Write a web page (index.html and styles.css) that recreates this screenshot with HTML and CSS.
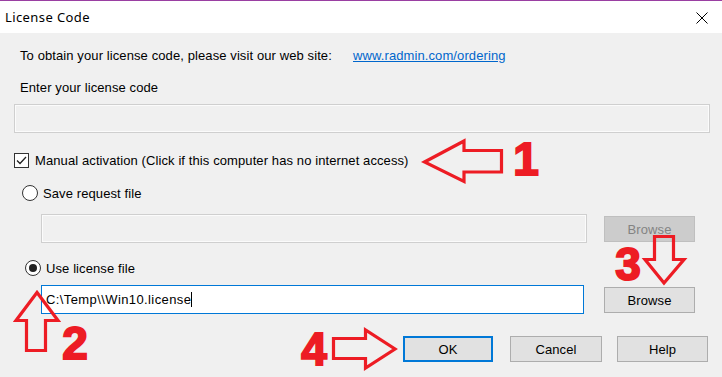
FILE: index.html
```html
<!DOCTYPE html>
<html>
<head>
<meta charset="utf-8">
<link rel="stylesheet" href="styles.css">
</head>
<body>
<div class="window">
  <div class="titlebar">
    <span class="title">License Code</span>
    <svg class="close" width="12" height="12" viewBox="0 0 12 12"><path d="M0.5 0.5 L11.5 11.5 M11.5 0.5 L0.5 11.5" stroke="#000" stroke-width="1" fill="none"/></svg>
  </div>
  <div class="content">
    <div class="row info">
      <span class="info-text">To obtain your license code, please visit our web site:</span>
      <a class="link">www.radmin.com/ordering</a>
    </div>
    <div class="row label">Enter your license code</div>
    <div class="field field-disabled wide"></div>
    <div class="row check-row">
      <span class="checkbox">
        <svg width="15" height="15" viewBox="0 0 15 15"><path d="M3 7.5 L6 10.5 L12 4" stroke="#222" stroke-width="1.3" fill="none"/></svg>
      </span>
      <span>Manual activation (Click if this computer has no internet access)</span>
    </div>
    <div class="row radio-row r1">
      <span class="radio"></span>
      <span>Save request file</span>
    </div>
    <div class="file-row fr1">
      <div class="field field-disabled f2"></div>
      <div class="btn btn-disabled">Browse</div>
    </div>
    <div class="row radio-row r2">
      <span class="radio checked"></span>
      <span>Use license file</span>
    </div>
    <div class="file-row fr2">
      <div class="field field-active f3"><span class="path">C:\Temp\\Win10.license</span><span class="caret"></span></div>
      <div class="btn">Browse</div>
    </div>
    <div class="buttons">
      <div class="btn btn-default">OK</div>
      <div class="btn btn-cancel">Cancel</div>
      <div class="btn btn-help">Help</div>
    </div>
  </div>
  <svg class="annot" width="722" height="377" viewBox="0 0 722 377">
    <g fill="none" stroke="#ed1c24" stroke-width="3.2" stroke-linejoin="miter">
      <polygon points="424.5,162 464,141 464,150.5 501.5,150.5 501.5,172 464,172 464,181.5"/>
      <polygon points="37,292.5 16,320.5 26.5,320.5 26.5,350.5 45.5,350.5 45.5,320.5 58,320.5"/>
      <polygon points="654.5,236.5 673.5,236.5 673.5,259.5 684,259.5 664,283 645,259.5 654.5,259.5"/>
      <polygon points="333.5,338.5 365.5,338.5 365.5,330 395,349 365.5,368 365.5,358.5 333.5,358.5"/>
    </g>
    <g class="num" fill="#ed1c24" stroke="#ed1c24" stroke-width="2" text-anchor="middle">
      <text x="526" y="175">1</text>
      <text x="75" y="359">2</text>
      <text x="628" y="280">3</text>
      <text x="314" y="365">4</text>
    </g>
  </svg>
</div>
</body>
</html>
```
FILE: styles.css
```css
* { box-sizing: border-box; }
html, body { margin: 0; padding: 0; }
body {
  background: #f0f0f0;
  font-family: "Liberation Sans", Arial, sans-serif;
  font-size: 13px;
  letter-spacing: 0.1px;
  color: #000;
}
.window {
  position: relative;
  width: 722px;
  height: 377px;
  background: #f0f0f0;
  overflow: hidden;
}
.titlebar {
  height: 33px;
  background: #fff;
  border-top: 1px solid #9a3fa2;
  display: flex;
  align-items: center;
  justify-content: space-between;
  padding: 0 14px 0 5px;
}
.title {
  font-family: "Noto Sans", "Open Sans", sans-serif;
  font-size: 13px;
  letter-spacing: 0.4px;
  color: #000;
  padding-bottom: 1px;
}
.close { display: block; margin-top: 1px; }
.content {
  display: flex;
  flex-direction: column;
  padding-left: 14px;
}
.row {
  height: 16px;
  display: flex;
  align-items: center;
  white-space: nowrap;
}
.info { margin-top: 14px; padding-left: 6px; }
.info-text { width: 333px; flex: none; }
.link { color: #0066cc; text-decoration: underline; }
.label { margin-top: 16px; padding-left: 6px; }
.field {
  height: 29px;
  border: 1px solid #cfcfcf;
}
.field-disabled { background: #f0f0f0; outline: 1px solid #fbfbfb; outline-offset: -2px; }
.wide { margin-top: 9px; width: 696px; }
.check-row { margin-top: 19px; gap: 6px; }
.checkbox {
  width: 15px;
  height: 15px;
  border: 1px solid #333;
  background: #fff;
  display: block;
  flex: none;
}
.checkbox svg { display: block; margin: -1px; }
.radio-row { gap: 5px; }
.r1 { margin-top: 17px; padding-left: 8px; }
.r2 { margin-top: 17px; padding-left: 11px; }
.radio {
  width: 16px;
  height: 16px;
  border: 1px solid #333;
  border-radius: 50%;
  background: #fff;
  flex: none;
  display: flex;
  align-items: center;
  justify-content: center;
}
.radio.checked::after {
  content: "";
  width: 8px;
  height: 8px;
  border-radius: 50%;
  background: #222;
}
.file-row {
  display: flex;
  align-items: flex-start;
  height: 29px;
  padding-left: 27px;
}
.fr1 { margin-top: 13px; }
.fr2 { margin-top: 9px; }
.f2 { width: 546px; margin-right: 17px; }
.f3 { width: 543px; margin-right: 20px; }
.field-active {
  background: #fff;
  border-color: #0078d7;
  display: flex;
  align-items: center;
  padding-left: 4px;
}
.path { letter-spacing: 0.4px; white-space: nowrap; }
.caret {
  width: 1px;
  height: 15px;
  background: #000;
  margin-left: 0;
}
.btn {
  width: 91px;
  height: 26px;
  margin-top: 2px;
  background: #e1e1e1;
  border: 1px solid #adadad;
  display: flex;
  align-items: center;
  justify-content: center;
  flex: none;
}
.btn-disabled {
  background: #cccccc;
  border-color: #bfbfbf;
  color: #838383;
}
.buttons {
  display: flex;
  margin-top: 22px;
  padding-left: 389px;
  height: 26px;
}
.buttons .btn { margin-top: 0; }
.btn-default {
  width: 90px;
  border: 2px solid #0078d7;
}
.btn-cancel { width: 92px; margin-left: 17px; }
.btn-help { width: 91px; margin-left: 15px; }
.annot {
  position: absolute;
  top: 0;
  left: 0;
  pointer-events: none;
}
.num text {
  font-family: "Liberation Sans", Arial, sans-serif;
  font-weight: bold;
  font-size: 46px;
  letter-spacing: 0;
}
```
